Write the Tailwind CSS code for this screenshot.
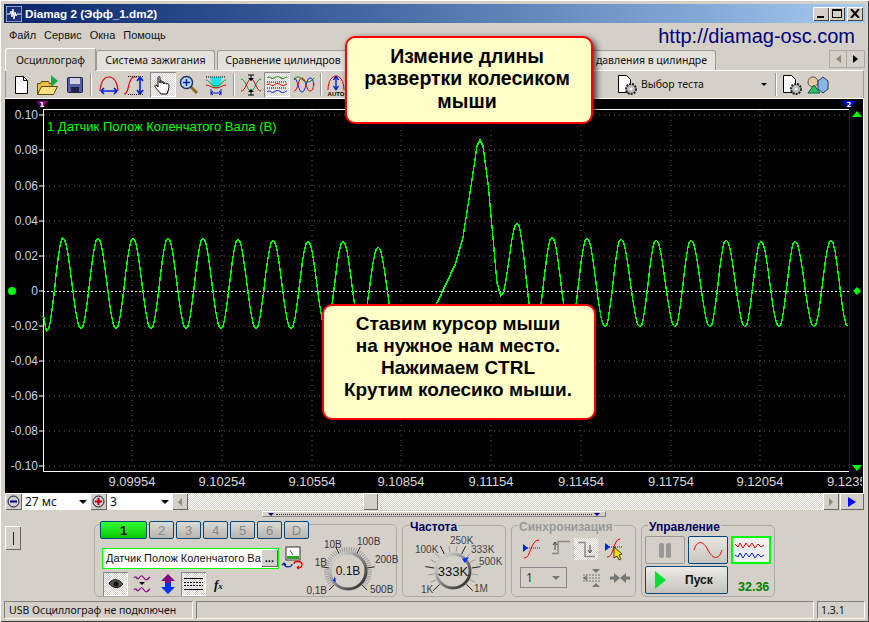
<!DOCTYPE html>
<html lang="en">

<head>
    <meta charset="UTF-8">
    <title>Diamag 2</title>
    <script src="https://cdn.jsdelivr.net/npm/@tailwindcss/browser@4"></script>
</head>

<body class="bg-white overflow-hidden">
    <div class="relative w-[869px] h-[622px] flex flex-col bg-[#d4d0c8] pt-[4px] px-[4px] pb-[3px] font-['Noto_Sans','Liberation_Sans',sans-serif] text-[10.500px] leading-none text-[#111] shadow-[inset_1px_1px_0_#fff,inset_-1px_-1px_0_#404040]">

        <!-- Title bar -->
        <div class="h-[19px] shrink-0 flex items-center bg-gradient-to-r from-[#0a246a] to-[#a6caf0] pl-[2px] pr-[2px]">
            <svg width="16" height="16" viewBox="0 0 16 16" class="mr-[3px]">
                <rect width="16" height="16" fill="#1c2f7c" stroke="#fff" />
                <path d="M1 8h3l1-3 1 6 1-8 1 10 1-7 1 4 1-2h4" fill="none" stroke="#fff" />
            </svg>
            <span class="font-['Liberation_Sans'] font-bold text-[11.700px] text-white">Diamag 2 (Эфф_1.dm2)</span>
            <div class="ml-auto flex">
                <div class="w-[16px] h-[14px] bg-[#d4d0c8] shadow-[inset_1px_1px_0_#fff,inset_-1px_-1px_0_#404040] relative"><div class="absolute left-[4px] bottom-[3px] w-[7px] h-[2px] bg-black"></div></div>
                <div class="w-[16px] h-[14px] bg-[#d4d0c8] shadow-[inset_1px_1px_0_#fff,inset_-1px_-1px_0_#404040] relative"><div class="absolute left-[3px] top-[2px] w-[10px] h-[9px] border border-black border-t-2"></div></div>
                <div class="w-[16px] h-[14px] ml-[2px] bg-[#d4d0c8] shadow-[inset_1px_1px_0_#fff,inset_-1px_-1px_0_#404040] flex items-center justify-center">
                    <svg width="10" height="9" viewBox="0 0 10 9"><path d="M1 0l8 9M9 0L1 9" stroke="#000" stroke-width="2" /></svg>
                </div>
            </div>
        </div>

        <!-- Menu -->
        <div class="h-[25px] shrink-0 flex items-center pl-[5px] pr-[10px] gap-[8px] font-['Liberation_Sans'] text-[11px]">
            <span>Файл</span><span>Сервис</span><span>Окна</span><span>Помощь</span>
            <span class="ml-auto text-[20px] text-[#000080]">http://diamag-osc.com</span>
        </div>

        <!-- Tabs -->
        <div class="h-[22px] shrink-0 flex items-end pl-[1px] relative">
            <div class="w-[91px] h-[23px] -mb-[1px] relative z-10 bg-[#d4d0c8] rounded-t-[3px] border border-b-0 border-[#999] border-t-white border-l-white flex items-center justify-center">Осциллограф</div>
            <div class="w-[119px] h-[20px] bg-[#e4e1da] rounded-t-[3px] border border-b-0 border-[#999] flex items-center justify-center">Система зажигания</div>
            <div class="w-[132px] h-[20px] ml-[2px] bg-[#e4e1da] rounded-t-[3px] border border-b-0 border-[#999] flex items-center justify-center">Сравнение цилиндров</div>
            <div class="w-[365px] h-[20px] ml-[2px] bg-[#e4e1da] rounded-t-[3px] border border-b-0 border-[#999] flex items-center justify-end pr-[8px]">Анализ давления в цилиндре</div>
            <div class="ml-auto mr-0 mb-[2px] flex h-[18px]">
                <div class="w-[18px] bg-[#d4d0c8] border border-[#aaa] flex items-center justify-center"><div class="border-y-[4px] border-y-transparent border-r-[5px] border-r-[#888]"></div></div>
                <div class="w-[18px] bg-[#d4d0c8] border border-l-0 border-[#aaa] flex items-center justify-center"><div class="border-y-[4px] border-y-transparent border-l-[5px] border-l-black"></div></div>
            </div>
        </div>

        <!-- Toolbar -->
        <div class="h-[28px] shrink-0 flex items-center pl-[1px] mx-[1px] border-t border-white border-x border-x-[#999]">
            <div class="w-[27px] h-[24px] flex items-center justify-center">
                <svg width="16" height="18" viewBox="0 0 16 18"><path d="M2.500 .5h8l4 4v13h-12z" fill="#fff" stroke="#000" /><path d="M10.500 .5v4h4" fill="none" stroke="#000" /></svg>
            </div>
            <div class="w-[27px] h-[24px] flex items-center justify-center">
                <svg width="24" height="22" viewBox="0 0 24 22"><path d="M1.500 20.500v-11h3l1-2h7l1 2h3v11z" fill="#e8c040" stroke="#5a4a10" /><path d="M1.500 20.500l4-8h16l-4 8z" fill="#f8e080" stroke="#5a4a10" /><path d="M15 1l7 6-7 6z" fill="#18a848" /></svg>
            </div>
            <div class="w-[27px] h-[24px] flex items-center justify-center">
                <svg width="16" height="16" viewBox="0 0 16 16"><rect x=".5" y=".5" width="15" height="15" rx="1" fill="#5060a0" stroke="#202040" /><rect x="3" y="1" width="10" height="6" fill="#d0d0e0" /><rect x="4" y="10" width="8" height="5" fill="#20204a" /></svg>
            </div>
            <div class="w-[2px] h-[23px] mx-[2px] bg-[#999] border-r border-white"></div>
            <div class="w-[27px] h-[24px] ml-[1px] flex items-center justify-center">
                <svg width="22" height="22" viewBox="0 0 22 22"><path d="M2 17C3 7 7 3 11 3s8 4 9 14" fill="none" stroke="#e00000" stroke-width="1.200" /><path d="M3 17h16M3 17l3-3M3 17l3 3M19 17l-3-3M19 17l-3 3" stroke="#0020e0" stroke-width="1.600" fill="none" /></svg>
            </div>
            <div class="w-[26px] h-[24px] flex items-center justify-center">
                <svg width="24" height="22" viewBox="0 0 24 22"><path d="M1 20c6 0 3-16 10-17h3" fill="none" stroke="#e00000" stroke-width="1.200" /><path d="M5 2.500h16M5 20.500h16" stroke="#000" stroke-dasharray="1 1" /><path d="M17 3v17M17 3l-3 4M17 3l3 4M17 20l-3-4M17 20l3-4" stroke="#0020e0" stroke-width="1.600" fill="none" /></svg>
            </div>
            <div class="w-[26px] h-[25px] ml-[2px] flex items-center justify-center bg-[repeating-conic-gradient(#fff_0_25%,#d4d0c8_0_50%)] bg-[length:2px_2px] shadow-[inset_1px_1px_0_#888,inset_-1px_-1px_0_#fff]">
                <svg width="18" height="20" viewBox="0 0 18 20"><path d="M7 19c-2-3-6-6-6-8s2-1 3 1V3c0-2 2-2 2 0v5-1c0-2 2-2 2 0v1c0-2 2-2 2 0v1c0-2 2-1 2 0 1-1 3 0 3 1 0 4-1 6-2 9z" fill="#fff" stroke="#000" /></svg>
            </div>
            <div class="w-[25px] h-[24px] flex items-center justify-center">
                <svg width="20" height="20" viewBox="0 0 20 20"><path d="M11 11l7 7" stroke="#8a6a20" stroke-width="3" /><circle cx="7.500" cy="7.500" r="6" fill="#b8d8f8" stroke="#203060" stroke-width="1.500" /><path d="M4 7.500h7M7.500 4v7" stroke="#0020a0" stroke-width="1.500" /></svg>
            </div>
            <div class="w-[30px] h-[24px] flex items-center justify-center">
                <svg width="22" height="22" viewBox="0 0 22 22"><path d="M5 3h12l-2 9-2 2H9l-2-2z" fill="#20e0e8" /><path d="M1 6c4 0 4 6 10 6s6-6 10-6" fill="none" stroke="#00a030" /><path d="M1 11c4 0 5 3 10 3s6-3 10-3" fill="none" stroke="#e00000" /><path d="M1 3h20" stroke="#000" stroke-dasharray="1 1" /><path d="M6 19h10M6 19l2-2M6 19l2 2M16 19l-2-2M16 19l-2 2M6 15v6M16 15v6" stroke="#0020c0" fill="none" /></svg>
            </div>
            <div class="w-[2px] h-[23px] mx-[2px] bg-[#999] border-r border-white"></div>
            <div class="w-[27px] h-[24px] flex items-center justify-center">
                <svg width="22" height="22" viewBox="0 0 22 22"><path d="M1 5c5 0 6 12 10 12s5-12 10-12" fill="none" stroke="#00a030" /><path d="M1 17c5 0 6-12 10-12s5 12 10 12" fill="none" stroke="#e00000" /><path d="M11 1v5M11 16v5M8 1h6M8 21h6" stroke="#000" /><path d="M8 4l3 3 3-3zM8 18l3-3 3 3z" fill="#000" /></svg>
            </div>
            <div class="w-[26px] h-[25px] flex items-center justify-center bg-[repeating-conic-gradient(#fff_0_25%,#d4d0c8_0_50%)] bg-[length:2px_2px] shadow-[inset_1px_1px_0_#888,inset_-1px_-1px_0_#fff]">
                <svg width="22" height="20" viewBox="0 0 22 20"><path d="M1 3c3-3 4 2 7 0s4-2 7 0 4-1 6-1" fill="none" stroke="#008000" /><path d="M1 10c3-3 4 2 7 0s4-2 7 0 4-1 6-1" fill="none" stroke="#e00000" /><path d="M1 17c3-3 4 2 7 0s4-2 7 0 4-1 6-1" fill="none" stroke="#0020e0" /><path d="M1 7h20M1 13h20" stroke="#000" stroke-dasharray="1 1" /></svg>
            </div>
            <div class="w-[28px] h-[24px] flex items-center justify-center">
                <svg width="22" height="20" viewBox="0 0 22 20"><path d="M1 3c4 0 4 14 8 14s4-14 8-14 3 6 4 8" fill="none" stroke="#0020e0" /><path d="M1 16c4 0 4-13 8-13s4 13 8 13 3-6 4-8" fill="none" stroke="#e00000" /><path d="M1 5c3-5 6-3 9 0s7 3 11-2" fill="none" stroke="#008000" /></svg>
            </div>
            <div class="w-[2px] h-[23px] mx-[2px] bg-[#999] border-r border-white"></div>
            <div class="w-[24px] h-[24px] flex items-center justify-center">
                <svg width="20" height="22" viewBox="0 0 20 22"><path d="M2 16C2 7 6 2 10 2s8 5 8 14" fill="none" stroke="#e00000" /><path d="M10 2v14M10 2L7.500 6M10 2l2.500 4M10 16l-2.500-4M10 16l2.500-4" stroke="#0020c0" stroke-width="1.400" fill="none" /><text x="10" y="21.500" text-anchor="middle" font-size="6" font-weight="700" font-family="Liberation Sans" fill="#000">AUTO</text></svg>
            </div>

            <div class="ml-auto flex items-center">
                <svg width="22" height="22" viewBox="0 0 22 22"><path d="M1.500 1.500h8l4 4v13h-12z" fill="#fff" stroke="#000" /><circle cx="14" cy="15" r="5" fill="#bbb" stroke="#222" stroke-dasharray="2 1" stroke-width="2" /><circle cx="14" cy="15" r="1.500" fill="#fff" /></svg>
                <span class="w-[120px] ml-[2px]">Выбор теста</span>
                <div class="border-x-[3px] border-x-transparent border-t-[3px] border-t-black mr-[8px]"></div>
                <div class="w-[2px] h-[23px] bg-[#999] border-r border-white mr-[5px]"></div>
                <svg width="22" height="22" viewBox="0 0 22 22"><path d="M1.500 1.500h8l4 4v13h-12z" fill="#fff" stroke="#000" /><circle cx="14" cy="15" r="5" fill="#bbb" stroke="#222" stroke-dasharray="2 1" stroke-width="2" /><circle cx="14" cy="15" r="1.500" fill="#fff" /></svg>
                <svg width="22" height="22" viewBox="0 0 22 22" class="ml-[3px] mr-[34px]"><circle cx="6" cy="8" r="5" fill="#e8c8a0" stroke="#555" /><path d="M16 3l5 4v8l-5 4-5-4V7z" fill="#88b8e8" stroke="#335" /><path d="M7 11l6 8H1z" fill="#30c060" stroke="#064" /></svg>
            </div>
        </div>

        <!-- Plot -->
        <div class="h-[395px] shrink-0 mx-[1px] bg-black border-t border-r border-white">
            <svg width="857" height="394" viewBox="5 99 857 394" class="block">
                <g stroke="#666" stroke-dasharray="1 4" id="grid"></g>
                <path d="M43 109V471M43 109H849M43 471H849" stroke="#fff" fill="none" shape-rendering="crispEdges" />
                <path d="M849 109V471" stroke="#0000ff" shape-rendering="crispEdges" />
                <path d="M36 101h12l-6 7z" fill="#800080" />
                <text x="42" y="106.500" font-size="7" font-weight="700" fill="#fff" text-anchor="middle" font-family="DejaVu Sans">1</text>
                <path d="M842 101h14l-7 7z" fill="#0000ff" />
                <text x="849" y="106.500" font-size="7" font-weight="700" fill="#fff" text-anchor="middle" font-family="DejaVu Sans">2</text>
                <path d="M852 117l5-6 5 6zM852 465l5 6 5-6zM857 287l4 4-4 4-4-4z" fill="#00ff00" />
                <circle cx="12" cy="291" r="4" fill="#00ff00" />
                <path d="M43 291H849" stroke="#fff" stroke-dasharray="2 2" shape-rendering="crispEdges" />
                <path id="wave" fill="none" stroke="#00ff00" stroke-width="1.400" shape-rendering="crispEdges" />
                <text x="47" y="131" font-size="13" fill="#00ff00" font-family="Liberation Sans">1 Датчик Полож Коленчатого Вала (В)</text>
                <g font-size="12" fill="#c4d4ec" font-family="Liberation Sans" text-anchor="end">
                    <text x="38" y="119">0.10</text><text x="38" y="154">0.08</text><text x="38" y="190">0.06</text>
                    <text x="38" y="225">0.04</text><text x="38" y="260">0.02</text><text x="38" y="295">0</text>
                    <text x="38" y="330">-0.02</text><text x="38" y="365">-0.04</text><text x="38" y="400">-0.06</text>
                    <text x="38" y="435">-0.08</text><text x="38" y="470">-0.10</text>
                </g>
                <g font-size="13" fill="#d8d8d8" font-family="Liberation Sans" text-anchor="middle">
                    <text x="132" y="486">9.09954</text><text x="222" y="486">9.10254</text><text x="312" y="486">9.10554</text>
                    <text x="401" y="486">9.10854</text><text x="491" y="486">9.11154</text><text x="581" y="486">9.11454</text>
                    <text x="671" y="486">9.11754</text><text x="760" y="486">9.12054</text><text x="827" y="486" text-anchor="start">9.1235</text>
                </g>
            </svg>
        </div>

        <!-- Scale / scroll row -->
        <div class="h-[17px] shrink-0 mx-[1px] flex items-stretch">
            <div class="w-[17px] flex items-center justify-center bg-[#d4d0c8] shadow-[inset_1px_1px_0_#fff,inset_-1px_-1px_0_#666]">
                <svg width="13" height="13" viewBox="0 0 13 13"><circle cx="6.500" cy="6.500" r="5.500" fill="#ccd" stroke="#111" /><path d="M3 6.500h7" stroke="#000080" stroke-width="2" /></svg>
            </div>
            <div class="w-[68px] bg-white flex items-center pl-[3px] text-[12px]">27 мс<div class="ml-auto mr-[3px] border-x-[4px] border-x-transparent border-t-[4px] border-t-black"></div></div>
            <div class="w-[17px] flex items-center justify-center bg-[#d4d0c8] shadow-[inset_1px_1px_0_#fff,inset_-1px_-1px_0_#666]">
                <svg width="13" height="13" viewBox="0 0 13 13"><circle cx="6.500" cy="6.500" r="5.500" fill="#ccd" stroke="#111" /><path d="M3 6.500h7M6.500 3v7" stroke="#c00000" stroke-width="2" /></svg>
            </div>
            <div class="w-[65px] bg-white flex items-center pl-[3px] text-[12px]">3<div class="ml-auto mr-[3px] border-x-[4px] border-x-transparent border-t-[4px] border-t-black"></div></div>
            <div class="w-[16px] flex items-center justify-center bg-[#d4d0c8] shadow-[inset_1px_1px_0_#fff,inset_-1px_-1px_0_#666]"><div class="border-y-[4px] border-y-transparent border-r-[4px] border-r-[#888]"></div></div>
            <div class="flex-1 flex items-stretch bg-[repeating-conic-gradient(#fff_0_25%,#d4d0c8_0_50%)] bg-[length:2px_2px]">
                <div class="w-[15px] ml-[175px] bg-[#d4d0c8] shadow-[inset_1px_1px_0_#fff,inset_-1px_-1px_0_#666]"></div>
            </div>
            <div class="w-[16px] flex items-center justify-center bg-[#d4d0c8] shadow-[inset_1px_1px_0_#fff,inset_-1px_-1px_0_#666]"><div class="border-y-[4px] border-y-transparent border-l-[4px] border-l-[#888]"></div></div>
            <div class="w-[24px] ml-[1px] flex items-center justify-center bg-[#d4d0c8] shadow-[inset_1px_1px_0_#fff,inset_-1px_-1px_0_#666]"><div class="border-y-[5px] border-y-transparent border-l-[8px] border-l-[#0000ff]"></div></div>
        </div>

        <!-- Bottom panel -->
        <div class="relative flex-1 min-h-0 flex items-start">
            <!-- splitter -->
            <div class="absolute left-[258px] top-[1px] w-[344px] h-[6px] flex items-center justify-between px-[5px] border border-[#808080] border-t-white border-l-white">
                <div class="border-x-[3px] border-x-transparent border-t-[3px] border-t-[#000080]"></div>
                <div class="flex-1 mx-[2px] border-t border-dotted border-[#223]"></div>
                <div class="border-x-[3px] border-x-transparent border-t-[3px] border-t-[#000080]"></div>
            </div>

            <div class="mt-[16px] ml-[1px] w-[16px] h-[24px] flex items-center justify-center bg-[#d4d0c8] shadow-[inset_1px_1px_0_#fff,inset_-1px_-1px_0_#666]"><div class="w-[1px] h-[13px] bg-[#222]"></div></div>

            <!-- Channel group -->
            <div class="relative ml-[73px] mt-[14px] w-[303px] h-[73px] border border-[#aaa] rounded-[5px] flex flex-col">
                <div class="absolute -top-[4px] left-[5px] flex gap-[2px] font-['Liberation_Sans'] text-[13px] text-[#888]">
                    <div class="w-[47px] h-[18px] rounded-[2px] border border-[#00467a] bg-gradient-to-b from-[#30ff30] to-[#00c800] flex items-center justify-center font-bold text-black">1</div>
                    <div class="w-[25px] h-[18px] rounded-[2px] border border-[#00467a] bg-gradient-to-b from-[#dcdad4] to-[#b8b6b0] flex items-center justify-center">2</div>
                    <div class="w-[25px] h-[18px] rounded-[2px] border border-[#00467a] bg-gradient-to-b from-[#dcdad4] to-[#b8b6b0] flex items-center justify-center">3</div>
                    <div class="w-[25px] h-[18px] rounded-[2px] border border-[#00467a] bg-gradient-to-b from-[#dcdad4] to-[#b8b6b0] flex items-center justify-center">4</div>
                    <div class="w-[25px] h-[18px] rounded-[2px] border border-[#00467a] bg-gradient-to-b from-[#dcdad4] to-[#b8b6b0] flex items-center justify-center">5</div>
                    <div class="w-[25px] h-[18px] rounded-[2px] border border-[#00467a] bg-gradient-to-b from-[#dcdad4] to-[#b8b6b0] flex items-center justify-center">6</div>
                    <div class="w-[25px] h-[18px] rounded-[2px] border border-[#00467a] bg-gradient-to-b from-[#dcdad4] to-[#b8b6b0] flex items-center justify-center">D</div>
                </div>
                <div class="flex items-center mt-[21px] ml-[7px]">
                    <div class="w-[177px] h-[21px] border border-[#00ff00] bg-white flex items-center pl-[3px] text-[11px] font-['Liberation_Sans'] whitespace-nowrap">
                        <span>Датчик Полож Коленчатого Ва</span>
                        <div class="ml-auto w-[18px] h-[18px] flex items-center justify-center font-bold bg-[#d4d0c8] shadow-[inset_1px_1px_0_#fff,inset_-1px_-1px_0_#666]">...</div>
                    </div>
                    <svg width="24" height="24" viewBox="0 0 24 24" class="ml-[2px]">
                        <rect x="5" y="1" width="14" height="13" fill="#fff" stroke="#333" />
                        <rect x="6" y="10" width="12" height="3" fill="#30a030" />
                        <path d="M12 9l-3-5" stroke="#555" />
                        <path d="M11 18c0 4-8 4-8-1M3 17l-2 2M3 17l2 2" fill="none" stroke="#0020a0" stroke-width="1.300" />
                        <path d="M13 18c0-3 8-4 8 1 0 3-3 3-5 3M16 22l2-2M16 22l2 1" fill="none" stroke="#e00000" stroke-width="1.300" />
                    </svg>
                </div>
                <div class="flex items-center mt-[2px] ml-[8px]">
                    <div class="w-[25px] h-[24px] flex items-center justify-center bg-[repeating-conic-gradient(#fff_0_25%,#d4d0c8_0_50%)] bg-[length:2px_2px] shadow-[inset_1px_1px_0_#888,inset_-1px_-1px_0_#fff]">
                        <svg width="16" height="12" viewBox="0 0 16 12"><path d="M1 5c4-5 10-4 14 1-4 5-10 5-14-1z" fill="#555" stroke="#111" /><circle cx="8" cy="6" r="2.500" fill="#111" /></svg>
                    </div>
                    <div class="w-[26px] ml-[1px] flex justify-center">
                        <svg width="18" height="20" viewBox="0 0 18 20"><path d="M1 4c2-4 3 3 5 0s3-3 5 0 3 2 6-1M1 16c2-4 3 3 5 0s3-3 5 0 3 2 6-1" fill="none" stroke="#800080" stroke-width="1.200" /><path d="M6 8h6l-3 3z" fill="#000" /></svg>
                    </div>
                    <div class="w-[26px] flex justify-center">
                        <svg width="16" height="20" viewBox="0 0 16 20"><path d="M8 0l7 7h-4v4H5V7H1z" fill="#800080" /><path d="M8 20l7-7h-4V9H5v4H1z" fill="#0030ff" /></svg>
                    </div>
                    <div class="w-[25px] h-[24px] flex items-center justify-center bg-[repeating-conic-gradient(#fff_0_25%,#d4d0c8_0_50%)] bg-[length:2px_2px] shadow-[inset_1px_1px_0_#888,inset_-1px_-1px_0_#fff]">
                        <svg width="19" height="14" viewBox="0 0 19 14"><path d="M0 1.500h19M0 12.500h19" stroke="#000" /><path d="M0 5.500h19M0 8.500h19" stroke="#000" stroke-dasharray="2 1" /></svg>
                    </div>
                    <span class="ml-[8px] font-['Liberation_Serif'] font-bold italic text-[13px]">f<span class="text-[9px]">x</span></span>
                </div>
                <!-- volts knob -->
                <svg width="86" height="70" viewBox="0 0 86 70" class="absolute left-[217px] top-[11px] overflow-visible">
                    <g id="knob1" stroke="#999"></g>
                    <circle cx="36" cy="35" r="18" fill="#d4d0c8" stroke="url(#ring)" stroke-width="3" />
                    <path d="M24 46l-3-1 2-5z" fill="#0030ff" />
                    <text x="36" y="39" font-size="12" text-anchor="middle" font-family="Liberation Sans" fill="#111">0.1В</text>
                    <g font-size="10" font-family="Liberation Sans" fill="#333">
                        <text x="15" y="58" text-anchor="end">0,1В</text><text x="15" y="30" text-anchor="end">1В</text>
                        <text x="12" y="12">10В</text><text x="45" y="9">100В</text><text x="63" y="27">200В</text><text x="58" y="57">500В</text>
                    </g>
                </svg>
            </div>

            <!-- Frequency group -->
            <div class="relative ml-[5px] mt-[15px] w-[104px] h-[72px] border border-[#aaa] rounded-[5px]">
                <span class="absolute -top-[5px] left-[6px] px-[1px] bg-[#d4d0c8] font-['Liberation_Sans'] font-bold text-[12px] text-[#000060]">Частота</span>
                <svg width="104" height="70" viewBox="0 0 104 70" class="absolute left-0 top-0">
                    <g id="knob2" stroke="#999"></g>
                    <circle cx="50" cy="45" r="17" fill="#d4d0c8" stroke="url(#ring)" stroke-width="3" />
                    <path d="M66 31l-7 2 3 4z" fill="#0030ff" />
                    <text x="50" y="50" font-size="13" text-anchor="middle" font-family="Liberation Sans" fill="#111">333K</text>
                    <g font-size="10" font-family="Liberation Sans" fill="#444">
                        <text x="12" y="27">100K</text><text x="47" y="18">250K</text><text x="68" y="27">333K</text>
                        <text x="76" y="39">500K</text><text x="18" y="67">1K</text><text x="71" y="66">1M</text>
                    </g>
                </svg>
            </div>

            <!-- Sync group -->
            <div class="relative ml-[5px] mt-[15px] w-[125px] h-[72px] border border-[#aaa] rounded-[5px]">
                <span class="absolute -top-[5px] left-[6px] px-[1px] bg-[#d4d0c8] font-['Liberation_Sans'] font-bold text-[12px] text-[#999]">Синхронизация</span>
                <div class="flex items-center mt-[12px] ml-[8px]">
                    <div class="w-[24px] h-[22px] flex justify-center">
                        <svg width="20" height="22" viewBox="0 0 20 22"><path d="M2 20c7 1 6-18 15-18" fill="none" stroke="#e00000" /><path d="M1 10h18" stroke="#0020e0" stroke-dasharray="1 1" /><path d="M1 6l5 4-5 4z" fill="#0020e0" /></svg>
                    </div>
                    <div class="w-[26px] h-[22px] ml-[4px] flex justify-center">
                        <svg width="20" height="20" viewBox="0 0 20 20"><path d="M1 15.500h6v-12h12" fill="none" stroke="#888" stroke-width="1.500" /><path d="M4 12V4M2 7l2-3 2 3" stroke="#444" fill="none" /></svg>
                    </div>
                    <div class="w-[24px] h-[22px] flex justify-center bg-[repeating-conic-gradient(#fff_0_25%,#d4d0c8_0_50%)] bg-[length:2px_2px]">
                        <svg width="22" height="22" viewBox="0 0 22 22"><path d="M3 4.500h7v14h10" fill="none" stroke="#888" stroke-width="1.500" /><path d="M15 7v8M13 12l2 3 2-3" stroke="#444" fill="none" /></svg>
                    </div>
                    <div class="w-[26px] h-[22px] ml-[4px] flex justify-center">
                        <svg width="22" height="24" viewBox="0 0 22 24"><path d="M3 19c7 1 6-18 13-18" fill="none" stroke="#e00000" /><path d="M1 9h18" stroke="#0020e0" stroke-dasharray="1 1" /><path d="M1 5l5 4-5 4z" fill="#0020e0" /><path d="M10 9v11l3-2 2 4 2-1-2-4 3-1z" fill="#ffe000" stroke="#000" stroke-width=".7" /></svg>
                    </div>
                </div>
                <div class="flex items-center mt-[7px] ml-[8px]">
                    <div class="w-[47px] h-[21px] border border-[#888] flex items-center pl-[5px] text-[12px] text-[#333]">1<div class="ml-auto mr-[6px] border-x-[4px] border-x-transparent border-t-[4px] border-t-[#777]"></div></div>
                    <div class="w-[26px] ml-[12px] flex justify-center">
                        <svg width="20" height="18" viewBox="0 0 20 18"><path d="M10 0h8l-4 4zM10 18h8l-4-4z" fill="#777" /><path d="M1 6h18M1 9h18M1 12h18" stroke="#777" stroke-dasharray="2 1" /><path d="M1 9l4-3v6z" fill="#777" /></svg>
                    </div>
                    <div class="w-[24px] ml-[3px] flex justify-center">
                        <svg width="20" height="12" viewBox="0 0 20 12"><path d="M0 6h6M20 6h-6" stroke="#777" stroke-width="3" /><path d="M10 6L4 1v10zM10 6l6-5v10z" fill="#777" /></svg>
                    </div>
                </div>
            </div>

            <!-- Control group -->
            <div class="relative ml-[5px] mt-[15px] w-[134px] h-[72px] border border-[#aaa] rounded-[5px]">
                <span class="absolute -top-[5px] left-[6px] px-[1px] bg-[#d4d0c8] font-['Liberation_Sans'] font-bold text-[12px] text-[#000060]">Управление</span>
                <div class="flex mt-[10px] ml-[3px] gap-[3px]">
                    <div class="w-[40px] h-[28px] rounded-[2px] border border-[#999] flex items-center justify-center gap-[2px]">
                        <div class="w-[5px] h-[15px] bg-[#999] rounded-[2px]"></div><div class="w-[5px] h-[15px] bg-[#999] rounded-[2px]"></div>
                    </div>
                    <div class="w-[40px] h-[28px] rounded-[2px] border border-[#00467a] bg-gradient-to-b from-[#e8e6e0] to-[#c8c6c0] flex items-center justify-center">
                        <svg width="30" height="22" viewBox="0 0 30 22"><path d="M1 11C4 1 10 1 15 11s11 10 14 0" fill="none" stroke="#e00000" /></svg>
                    </div>
                    <div class="w-[40px] h-[28px] border-2 border-[#00ff00] bg-[#f0f0f0] flex items-center justify-center">
                        <svg width="34" height="22" viewBox="0 0 34 22"><path d="M1 5l3 3 2-4 3 5 3-5 3 4 3-4 3 5 3-4 3 3 3-2" fill="none" stroke="#e00000" /><path d="M1 16l3 2 2-4 3 5 3-5 3 4 3-4 3 5 3-4 3 3 3-2" fill="none" stroke="#0020e0" /></svg>
                    </div>
                </div>
                <div class="flex items-end ml-[3px] mt-[2px]">
                    <div class="w-[83px] h-[28px] rounded-[2px] border border-[#00467a] bg-gradient-to-b from-[#ecebe6] to-[#c4c2bc] flex items-center pl-[9px]">
                        <div class="border-y-[9px] border-y-transparent border-l-[11px] border-l-[#00e030]"></div>
                        <span class="ml-[19px] font-['Liberation_Sans'] font-bold text-[12px]">Пуск</span>
                    </div>
                    <span class="ml-[10px] mb-[1px] font-['Liberation_Sans'] font-bold text-[12.500px] text-[#008000]">32.36</span>
                </div>
            </div>
        </div>

        <!-- Status bar -->
        <div class="h-[18px] shrink-0 flex gap-[3px]">
            <div class="w-[189px] flex items-center pl-[4px] border border-[#808080] border-r-white border-b-white">USB Осциллограф не подключен</div>
            <div class="flex-1 border border-[#808080] border-r-white border-b-white"></div>
            <div class="w-[48px] flex items-center pl-[3px] border border-[#808080] border-r-white border-b-white text-[#111]">1.3.1</div>
        </div>

        <!-- Callouts -->
        <div class="absolute left-[345px] top-[36px] w-[248px] h-[88px] flex items-center justify-center text-center rounded-[10px] border-2 border-[#ff0000] bg-[#ffffc8] shadow-[3px_3px_7px_rgba(0,0,0,0.8)] font-['Liberation_Sans'] font-bold text-[19.500px] leading-[22.500px] text-black pr-[4px]">
            <div class="-mt-[3px]">Измение длины<br>развертки колесиком<br>мыши</div>
        </div>
        <div class="absolute left-[322px] top-[304px] w-[274px] h-[116px] flex items-center justify-center text-center rounded-[10px] border-2 border-[#ff0000] bg-[#ffffc8] shadow-[3px_3px_7px_rgba(0,0,0,0.8)] font-['Liberation_Sans'] font-bold text-[19px] leading-[22px] text-black pr-[2px]">
            <div class="-mt-[11px]">Ставим курсор мыши<br>на нужное нам место.<br>Нажимаем CTRL<br>Крутим колесико мыши.</div>
        </div>

        <!-- shared ring gradient -->
        <svg width="0" height="0" class="absolute">
            <defs>
                <linearGradient id="ring" x1="0" y1="0" x2="1" y2="1">
                    <stop offset="0" stop-color="#e8e8e8" />
                    <stop offset="1" stop-color="#222" />
                </linearGradient>
            </defs>
        </svg>
    </div>

    <script>
        // Grid lines
        const gridXs = [132, 222, 312, 401, 491, 581, 671, 760];
        const gridYs = [115, 150, 186, 221, 256, 326, 361, 396, 431, 466];
        let grid = '';
        gridXs.forEach(x => { grid += `<path d="M${x} 110V470" />`; });
        gridYs.forEach(y => { grid += `<path d="M44 ${y}H848" />`; });
        // small axis ticks
        gridYs.concat(291).forEach(y => { grid += `<path d="M39 ${y}H43" stroke="#fff" stroke-dasharray="none" />`; });
        document.getElementById('grid').innerHTML = grid;

        // Trace: extrema read off the picture, cosine between them, rounded so it steps like the original
        const extrema = [
            [43, 316], [47, 331], [63, 238], [81, 329], [98, 238], [116, 329], [133, 238], [151, 329],
            [168, 238], [186, 329], [203, 238], [221, 329], [238, 239], [256, 329], [273, 240], [291, 329],
            [308, 241], [326, 329], [343, 241], [361, 329], [378, 247], [396, 329], [415, 335]
        ];
        const bump = [[415, 335], [437, 303], [455, 265], [463, 237], [472, 180], [477, 146], [480, 140], [483, 146], [488, 183], [492, 227], [497, 283], [501, 296]];
        const tail = [
            [501, 296], [517, 223], [535, 330], [552, 237], [570, 330], [587, 238], [605, 327], [621, 239],
            [640, 327], [656, 240], [675, 327], [691, 240], [710, 327], [726, 240], [745, 327], [761, 241],
            [779, 327], [795, 241], [814, 327], [831, 240], [848, 327]
        ];
        function cosLerp(pts, d) {
            for (let i = 0; i < pts.length - 1; i++) {
                const [x0, y0] = pts[i], [x1, y1] = pts[i + 1];
                for (let x = x0; x < x1; x++) {
                    const t = (1 - Math.cos(Math.PI * (x - x0) / (x1 - x0))) / 2;
                    d.push(`${x} ${Math.round(y0 + (y1 - y0) * t)}`);
                }
            }
        }
        function lineLerp(pts, d) {
            for (let i = 0; i < pts.length - 1; i++) {
                const [x0, y0] = pts[i], [x1, y1] = pts[i + 1];
                for (let x = x0; x < x1; x++) d.push(`${x} ${Math.round(y0 + (y1 - y0) * (x - x0) / (x1 - x0))}`);
            }
        }
        const pts = [];
        cosLerp(extrema, pts);
        lineLerp(bump, pts);
        cosLerp(tail, pts);
        document.getElementById('wave').setAttribute('d', 'M' + pts.join('L'));

        // Knob ticks: a fine ring of minor ticks with dark ones at every label
        function ticks(id, cx, cy, r0, r1, minor) {
            let s = '';
            for (let a = 45; a <= 315; a += minor) {
                const major = Math.abs((a - 45) % 54) < 0.1;
                const rad = a * Math.PI / 180;
                const re = major ? r1 + 3 : r1;
                s += `<path d="M${cx - Math.sin(rad) * r0} ${cy + Math.cos(rad) * r0}L${cx - Math.sin(rad) * re} ${cy + Math.cos(rad) * re}" ${major ? 'stroke="#222"' : ''} />`;
            }
            document.getElementById(id).innerHTML = s;
        }
        ticks('knob1', 36, 35, 19, 24, 6);
        ticks('knob2', 50, 45, 19, 25, 18);
    </script>
</body>

</html>
